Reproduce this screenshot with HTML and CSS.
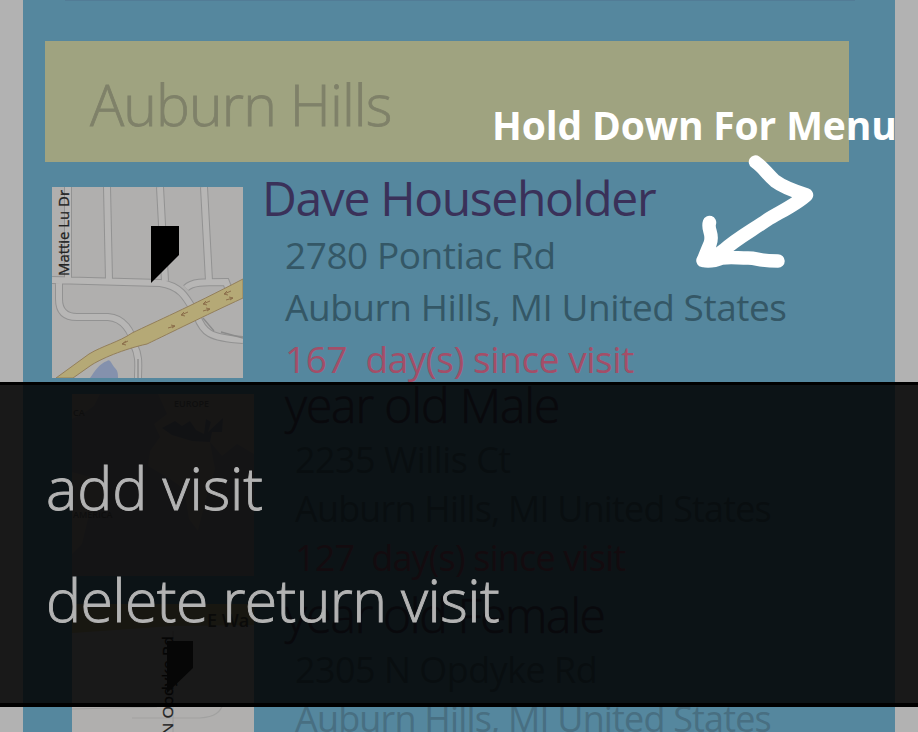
FILE: index.html
```html
<!DOCTYPE html>
<html lang="en">
<head>
<meta charset="utf-8">
<title>Return visits</title>
<link rel="stylesheet" href="styles.css">
</head>
<body>
<main class="panel">
  <div class="rule"></div>
  <h1 class="city">Auburn Hills</h1>

  <article class="visit first">
    <svg class="map" viewBox="0 0 191 191">
      <rect width="191" height="191" fill="#b0afae"/>
      <path d="M38 191C43 184 47 177 55 174C58 171 60 178 63 181C66 184 66 187 66 191Z" fill="#8491ad"/>
      <path d="M16 0V94M55 0L57 93M108 0L113 94M152 0L157 94M0 93L108 96C130 99 135 112 145 129C151 145 157 151 191 153M134 101C140 95 150 95 174 95L177 103M7 94V112C7 124 13 130 25 130H56C72 131 80 145 82 158C88 170 86 180 86 191" fill="none" stroke="#929292" stroke-width="8"/>
      <path d="M16 0V94M55 0L57 93M108 0L113 94M152 0L157 94M0 93L108 96C130 99 135 112 145 129C151 145 157 151 191 153M134 101C140 95 150 95 174 95L177 103M7 94V112C7 124 13 130 25 130H56C72 131 80 145 82 158C88 170 86 180 86 191" fill="none" stroke="#b7b6b5" stroke-width="6"/>
      <path d="M86 172V191M151 131L162 144M169 145L191 151" fill="none" stroke="#8b8b8b" stroke-width="1.3"/>
      <path d="M4 191L37 167C50 159 67 155 80 146C105 134 135 121 191 92V111C150 130 120 145 95 157C72 162 48 172 38 179L21 191Z" fill="#b5a976" stroke="#937f5b" stroke-width="1"/>
      <path d="M70 157L76 154M70 157L74 154M70 157L74 158M116 141L123 139L119 138M123 139L120 141M129 128L136 125M129 128L132 125M129 128L133 129M151 117L158 114M151 117L154 114M151 117L155 118M151 124L158 122L154 121M158 122L155 124M172 107L179 104M172 107L175 104M172 107L176 108M174 113L181 111L177 110M181 111L178 113" fill="none" stroke="#8c6f4b" stroke-width="1"/>
      <text class="street" transform="translate(17 89) rotate(-90)" textLength="86" lengthAdjust="spacingAndGlyphs">Mattie Lu Dr</text>
      <path d="M99 39H127V68L99 96Z" fill="#000"/>
    </svg>
    <div class="details">
      <h2 class="name">Dave Householder</h2>
      <p>2780 Pontiac Rd</p>
      <p>Auburn Hills, MI United States</p>
      <p class="since">167&nbsp; day(s) since visit</p>
    </div>
  </article>

  <article class="visit">
    <svg class="map" viewBox="0 0 182 182">
      <rect width="182" height="182" fill="#8f8b93"/>
      <g fill="#a29e97">
        <path d="M0 0H28L22 12L12 19L0 25ZM0 78L22 84L36 95L28 110L16 125L10 150L0 160Z"/>
        <path d="M86 0H182V60L165 50L150 62L138 48L143 75L134 105L126 137L117 125L112 95L98 85L76 72L78 57L88 43L82 30L95 20Z"/>
      </g>
      <path d="M90 34L103 27L110 32L118 27L124 36L132 40L134 25L139 28L136 38L151 24L150 38L140 38L138 48L120 47L100 41Z" fill="#7b7f90"/>
      <text class="world" x="102" y="13">EUROPE</text>
      <text class="world" x="1" y="22">CA</text>
      <text class="world" x="1" y="124">AMERICA</text>
    </svg>
    <div class="details">
      <h2 class="name">year old Male</h2>
      <p class="short">2235 Willis Ct</p>
      <p>Auburn Hills, MI United States</p>
      <p class="since">127&nbsp; day(s) since visit</p>
    </div>
  </article>

  <article class="visit">
    <svg class="map" viewBox="0 0 182 182">
      <rect width="182" height="182" fill="#b0afae"/>
      <path d="M0 0H182V21L100 22L0 29Z" fill="#aaa17a"/>
      <path d="M101 27V182M0 105L85 103M60 114H128C143 113 149 108 151 99" fill="none" stroke="#a1a1a0" stroke-width="1.2"/>
      <text class="avenue" x="135" y="23">E Wa</text>
      <text class="street" transform="translate(101 131) rotate(-90)" textLength="99" lengthAdjust="spacingAndGlyphs">N Opdyke Rd</text>
      <path d="M95 37H121V64L95 89Z" fill="#2a2a2a"/>
    </svg>
    <div class="details">
      <h2 class="name female">year old Female</h2>
      <p class="short">2305 N Opdyke Rd</p>
      <p class="faint">Auburn Hills, MI United States</p>
    </div>
  </article>
</main>

<nav class="menu">
  <a class="add">add visit</a>
  <a>delete return visit</a>
</nav>

<div class="hint">Hold Down For Menu</div>
<svg class="arrow" viewBox="0 0 130 126">
  <path d="M65.500 12C73 17 77 24 85 31C93 37 107 42 116.500 45C107 54 90 62 77 70C61 81 46 89 34 100L22 109M19.500 72.500C17 80 24 84 20 94C16 103 15 107 13 110.500M13 110.500C20 112 27 110 32 108C42 107 47 108 58 108C69 108 66 111 88 111" fill="none" stroke="#fff" stroke-width="13.500" stroke-linecap="round" stroke-linejoin="round"/>
</svg>
</body>
</html>
```
FILE: styles.css
```css
* { box-sizing: border-box; margin: 0; padding: 0; }

body {
  position: relative;
  width: 918px;
  height: 732px;
  overflow: hidden;
  background: #b2b2b2;
  font-family: "Open Sans", "Noto Sans", sans-serif;
}

.panel {
  width: 872px;
  height: 732px;
  margin-left: 23px;
  overflow: hidden;
  background: #55879e;
}

.rule { height: 1px; margin: 0 40px 40px 42px; background: #527c96; }

.city {
  width: 804px;
  height: 121px;
  margin-left: 22px;
  padding-left: 45px;
  background: #9fa380;
  color: #7f8169;
  font-size: 57px;
  font-weight: 300;
  letter-spacing: -.9px;
  line-height: 127px;
  white-space: nowrap;
  -webkit-text-stroke: .8px #7f8169;
}

.visit {
  display: grid;
  grid-template-columns: 182px 1fr;
  column-gap: 31px;
  height: 210px;
  padding-left: 49px;
}
.visit.first {
  grid-template-columns: 191px 1fr;
  column-gap: 19px;
  height: 212px;
  padding: 4px 0 0 29px;
}
.map { display: block; width: 182px; height: 182px; margin-top: 20px; }
.first .map { width: 191px; height: 191px; margin-top: 21px; }

.details { padding-top: 2px; white-space: nowrap; }
.name {
  height: 56px;
  margin-bottom: 3px;
  color: #3f4059;
  font-size: 48px;
  font-weight: 300;
  letter-spacing: -1.15px;
  line-height: 58px;
  -webkit-text-stroke: .6px #3f4059;
}
.name.female { letter-spacing: -1.4px; }
.first .name {
  margin-bottom: 5px;
  color: #3a3159;
  font-weight: 400;
  letter-spacing: -1.35px;
  line-height: 60px;
  -webkit-text-stroke: 0;
}
.details p {
  padding-left: 10px;
  color: #3f6474;
  font-size: 36px;
  letter-spacing: -.84px;
  line-height: 49px;
}
.details .short { letter-spacing: -.55px; }
.first .details p {
  padding-left: 23px;
  color: #345766;
  font-size: 37px;
  letter-spacing: -.45px;
  line-height: 52px;
}
.details .since { color: #8a5268; }
.first .details .since { color: #a34e68; }
.details .faint { color: #486f82; }

.street { font: 14.5px "Open Sans", sans-serif; fill: #222; stroke: #222; stroke-width: .3px; }
.avenue { font: 600 18px "Open Sans", sans-serif; fill: #4a4a40; }
.world { font: 600 9px "Open Sans", sans-serif; fill: #666; }

.menu {
  position: absolute;
  top: 382px;
  left: 0;
  display: flex;
  flex-direction: column;
  width: 918px;
  height: 325px;
  padding: 46px 0 0 46px;
  border-top: 3px solid #000;
  border-bottom: 4px solid #000;
  background: rgba(0, 0, 0, .86);
  background-clip: padding-box;
  color: #b3b3b3;
  font-size: 59px;
  font-weight: 300;
  letter-spacing: -.62px;
  white-space: nowrap;
  -webkit-text-stroke: .9px #b3b3b3;
}
.menu a { height: 112px; line-height: 112px; }
.menu .add { letter-spacing: -.1px; }

.hint {
  position: absolute;
  top: 98px;
  left: 492px;
  color: #fff;
  font-size: 39px;
  font-weight: 700;
  letter-spacing: -.15px;
  line-height: 54px;
  white-space: nowrap;
}
.arrow { position: absolute; top: 150px; left: 690px; width: 130px; height: 126px; }
```
